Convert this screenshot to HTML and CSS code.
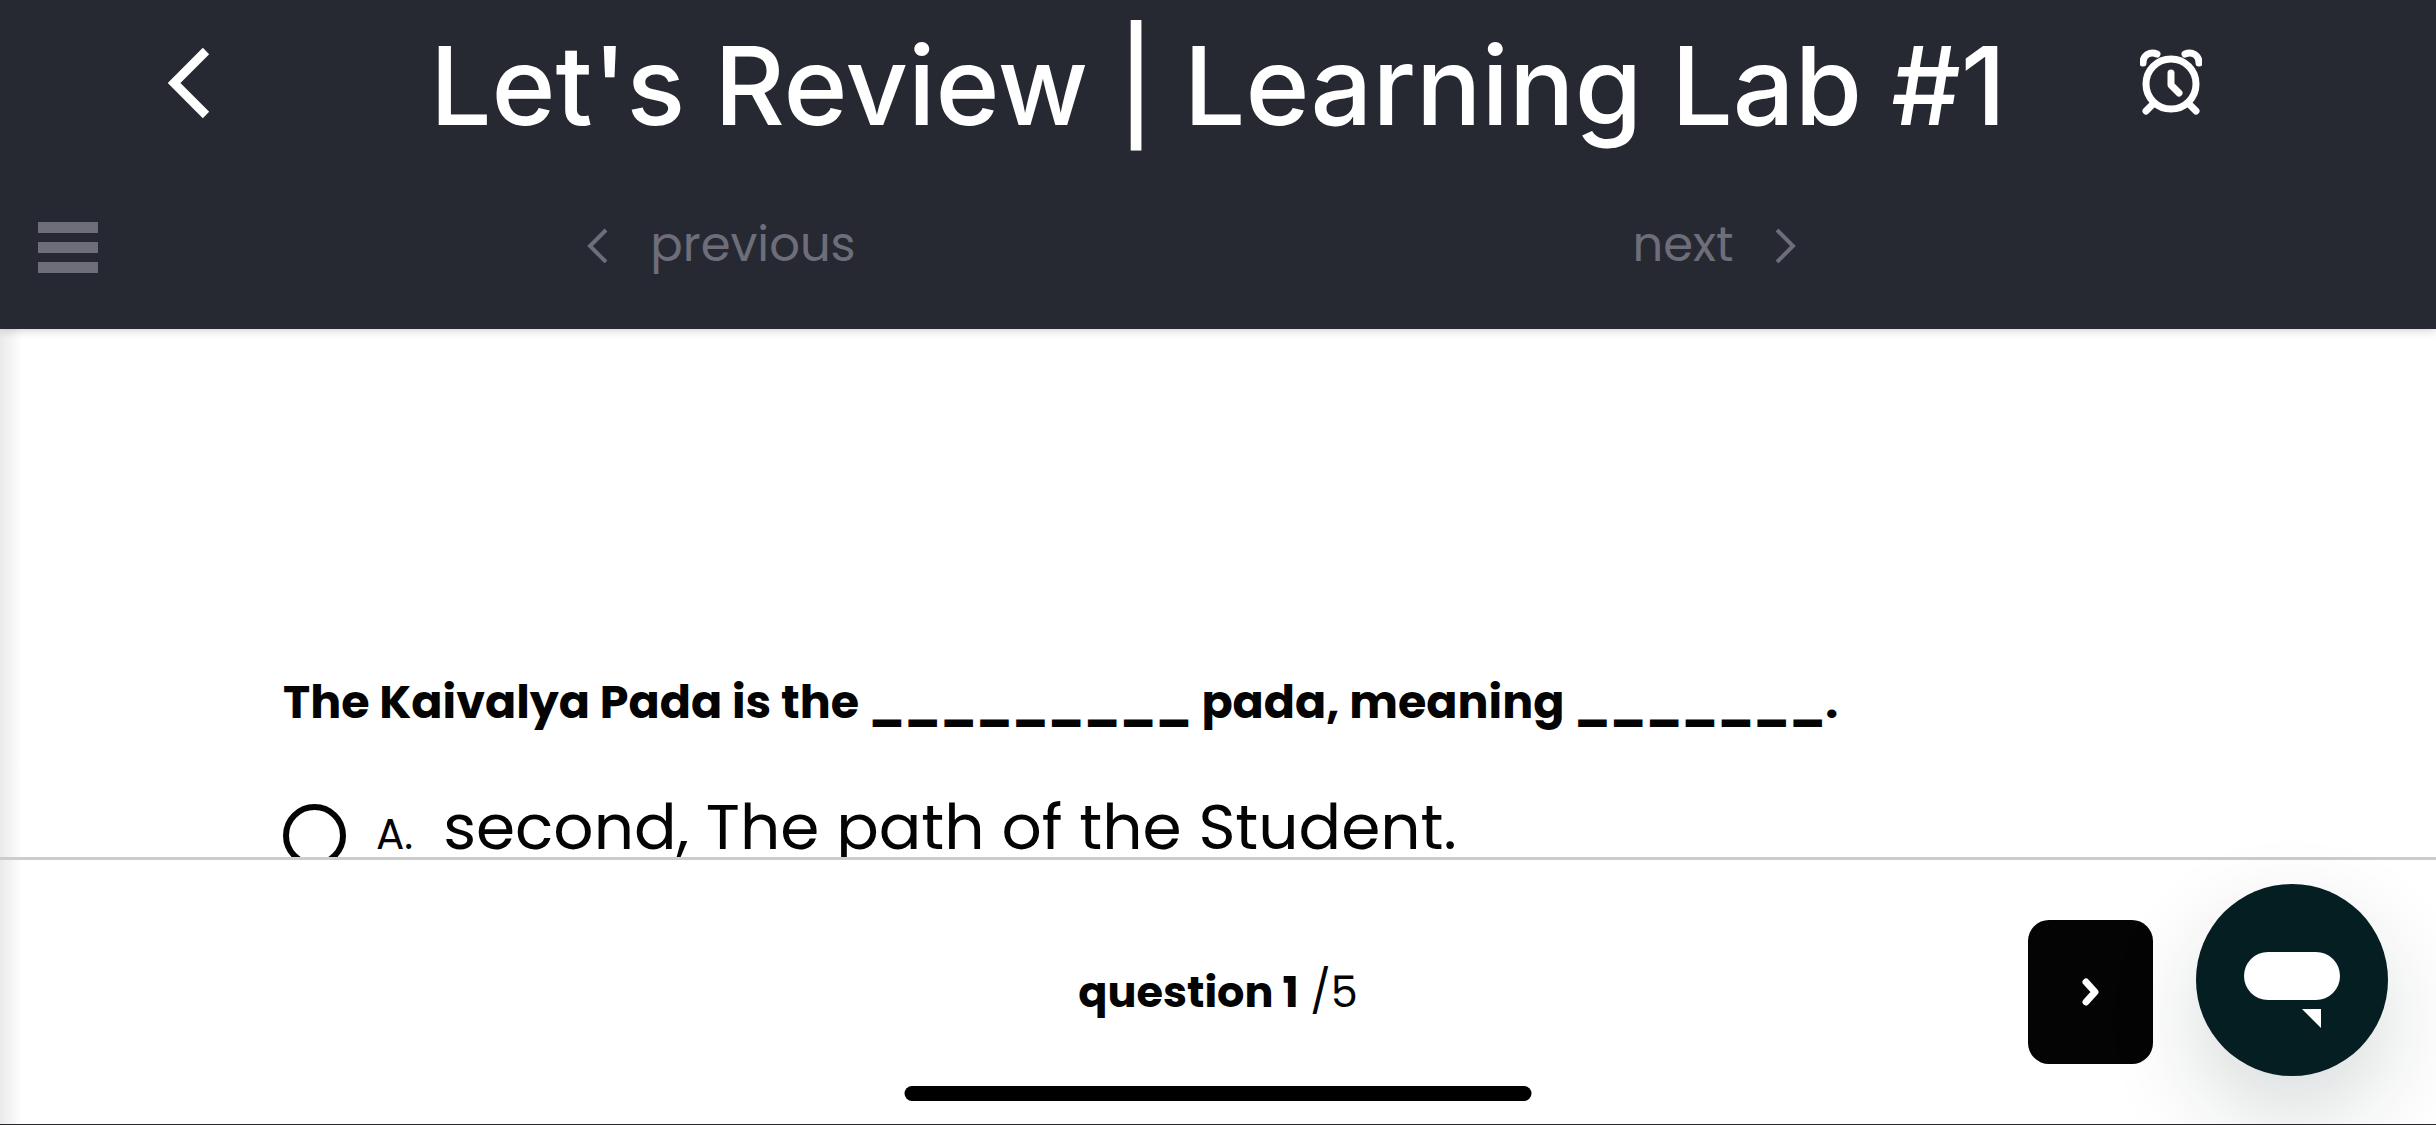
FILE: index.html
```html
<!DOCTYPE html>
<html lang="en">
<head>
  <title>Let's Review | Learning Lab #1</title>
  <meta charset="utf-8">
  <meta name="viewport" content="width=device-width, initial-scale=1">
  <link rel="stylesheet" href="styles.css">
</head>
<body>
  <header class="header">
    <div class="title-bar">
      <button class="back" aria-label="Back">
        <svg width="42" height="72" viewBox="0 0 42 72"><path d="M38 4 L6 36 L38 68" fill="none" stroke="#fff" stroke-width="9"/></svg>
      </button>
      <h1 class="title">Let's Review | Learning Lab #1</h1>
      <button class="timer" aria-label="Timer">
        <svg width="62" height="68" viewBox="0 0 62 68" fill="none" stroke="#fff" stroke-width="7" stroke-linecap="round" stroke-linejoin="round">
          <circle cx="31" cy="35" r="25"/>
          <path d="M31 24 V36 L39 44"/>
          <path d="M3 14 C3 6 10 2 17 5"/>
          <path d="M59 14 C59 6 52 2 45 5"/>
          <path d="M13 55 L6 62 M49 55 L56 62"/>
        </svg>
      </button>
    </div>

    <nav class="nav-bar">
      <button class="menu" aria-label="Menu">
        <svg width="60" height="52" viewBox="0 0 60 52" fill="#6d6e7a"><path d="M0 0h60v11H0zM0 20h60v11H0zM0 40h60v11H0z"/></svg>
      </button>
      <button class="nav-btn">
        <svg width="22" height="36" viewBox="0 0 22 36"><path d="M20 3 L4 19 L20 35" fill="none" stroke="currentColor" stroke-width="4"/></svg>
        previous
      </button>
      <button class="nav-btn">
        next
        <svg width="22" height="36" viewBox="0 0 22 36"><path d="M2 3 L18 19 L2 35" fill="none" stroke="currentColor" stroke-width="4"/></svg>
      </button>
    </nav>
  </header>

  <main class="content">
    <h2 class="question">The Kaivalya Pada is the _________ pada, meaning _______.</h2>
    <label class="option">
      <input class="option-radio" type="radio" name="answer">
      <span class="option-letter">A.</span>
      <span class="option-text">second, The path of the Student.</span>
    </label>
  </main>

  <footer class="footer">
    <p class="progress"><strong>question 1</strong> /5</p>
    <button class="next-btn" aria-label="Next question">
      <svg width="18" height="28" viewBox="0 0 18 28"><path d="M4 4 L13 14 L4 24" fill="none" stroke="#fff" stroke-width="7" stroke-linecap="round" stroke-linejoin="round"/></svg>
    </button>
    <div class="home-indicator"></div>
  </footer>

  <button class="chat-btn" aria-label="Open chat">
    <svg width="96" height="78" viewBox="0 0 96 78" fill="#fff"><rect width="96" height="48" rx="24"/><path d="M58 57h19v19z"/></svg>
  </button>
</body>
</html>
```
FILE: styles.css
```css
* {
  box-sizing: border-box;
}

body {
  margin: 0;
  height: 100vh;
  display: flex;
  flex-direction: column;
  overflow: hidden;
  background: #fff;
  color: #040404;
  border-bottom: 1px solid #272932;
  font-family: Poppins, Inter, sans-serif;
}

button {
  padding: 0;
  border: 0;
  background: none;
  font: inherit;
  cursor: pointer;
}

svg {
  display: block;
}

/* Header */
.header {
  position: relative;
  z-index: 1;
  background: #272932;
  box-shadow: 0 0 10px rgba(0, 0, 0, 0.25);
}

.title-bar {
  display: grid;
  grid-template-columns: 296px 1fr 296px;
  align-items: center;
  height: 166px;
}

.title {
  margin: 0;
  padding-top: 4px;
  color: #fff;
  font-family: Inter, sans-serif;
  font-size: 109px;
  font-weight: 500;
  line-height: 162px;
  text-align: center;
  white-space: nowrap;
}

.back {
  justify-self: end;
  margin-right: 86px;
}

.timer {
  justify-self: start;
}

.nav-bar {
  display: grid;
  grid-template-columns: 224px 1fr 1fr 224px;
  align-items: center;
  height: 163px;
}

.menu {
  justify-self: start;
  margin-left: 38px;
}

.nav-btn {
  display: flex;
  align-items: center;
  justify-content: center;
  gap: 42px;
  padding-bottom: 6px;
  color: #6d6e7a;
  font-size: 48px;
  line-height: 72px;
}

/* Question */
.content {
  flex: 1;
  min-height: 0;
  overflow: hidden;
  padding: 337px 283px 0;
  background: linear-gradient(to right, #eaeaea, #fff 22px);
}

.question {
  margin: 0;
  font-size: 46px;
  font-weight: 700;
  line-height: 72px;
}

.option {
  display: flex;
  align-items: baseline;
  margin-top: 41px;
}

.option-radio {
  appearance: none;
  align-self: flex-end;
  width: 63px;
  height: 63px;
  margin: 0 30px 8px 0;
  border: 6px solid #040404;
  border-radius: 50%;
}

.option-letter {
  margin-right: 30px;
  font-size: 42px;
}

.option-text {
  font-size: 63px;
  line-height: 96px;
}

/* Footer */
.footer {
  position: relative;
  display: grid;
  grid-template-columns: 1fr auto 1fr;
  align-items: center;
  height: 267px;
  border-top: 3px solid #ccc;
  background: linear-gradient(to right, #eaeaea, #fff 22px);
}

.progress {
  grid-column: 2;
  margin: 0;
  font-size: 43px;
  line-height: 66px;
}

.next-btn {
  display: flex;
  align-items: center;
  justify-content: center;
  justify-self: end;
  width: 125px;
  height: 144px;
  margin-right: 283px;
  border-radius: 21px;
  background: #040404;
}

.home-indicator {
  position: absolute;
  bottom: 23px;
  left: 50%;
  width: 627px;
  height: 15px;
  border-radius: 8px;
  background: #000;
  transform: translateX(-50%);
}

.chat-btn {
  position: fixed;
  right: 48px;
  bottom: 49px;
  z-index: 2;
  display: flex;
  align-items: center;
  justify-content: center;
  width: 192px;
  height: 192px;
  padding-top: 22px;
  border-radius: 50%;
  background: #051e21;
  box-shadow: 0 40px 96px rgba(5, 30, 33, 0.16);
}
```
